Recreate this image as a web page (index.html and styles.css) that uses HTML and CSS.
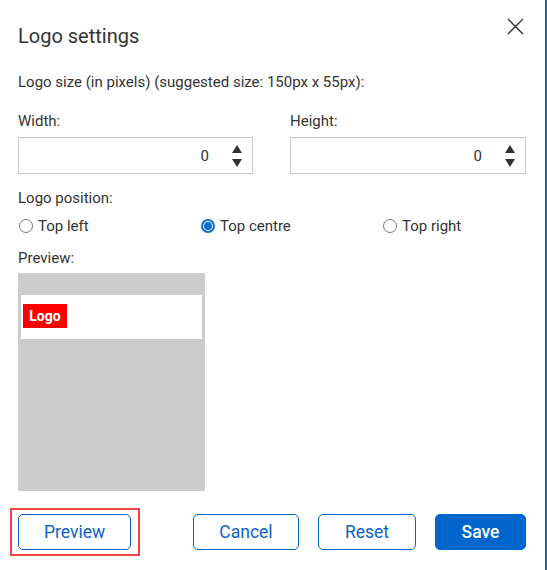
FILE: index.html
```html
<!DOCTYPE html>
<html>
<head>
<meta charset="utf-8">
<link rel="stylesheet" href="styles.css">
</head>
<body>
<div class="dialog">
  <div class="header">
    <h1 class="title">Logo settings</h1>
    <button class="close" aria-label="Close">
      <svg width="17" height="17" viewBox="0 0 17 17"><path d="M1 1 L16 16 M16 1 L1 16" stroke="#333" stroke-width="1.4" fill="none"/></svg>
    </button>
  </div>
  <p class="note">Logo size (in pixels) (suggested size: 150px x 55px):</p>
  <div class="dims">
    <div class="field">
      <div class="label">Width:</div>
      <div class="num">
        <span class="val">0</span>
        <span class="spin"><span class="up"></span><span class="down"></span></span>
      </div>
    </div>
    <div class="field">
      <div class="label">Height:</div>
      <div class="num">
        <span class="val">0</span>
        <span class="spin"><span class="up"></span><span class="down"></span></span>
      </div>
    </div>
  </div>
  <div class="label pos-label">Logo position:</div>
  <div class="radios">
    <label class="radio"><span class="dot"></span>Top left</label>
    <label class="radio on"><span class="dot"></span>Top centre</label>
    <label class="radio"><span class="dot"></span>Top right</label>
  </div>
  <div class="label prev-label">Preview:</div>
  <div class="preview">
    <div class="strip"><span class="logo">Logo</span></div>
  </div>
  <div class="footer">
    <button class="btn hl">Preview</button>
    <div class="actions">
      <button class="btn">Cancel</button>
      <button class="btn">Reset</button>
      <button class="btn primary">Save</button>
    </div>
  </div>
</div>
</body>
</html>
```

FILE: styles.css
```css
* { box-sizing: border-box; }
html, body { margin: 0; padding: 0; background: #fff; }
body { font-family: Roboto, "Liberation Sans", sans-serif; color: #333; }
.dialog {
  width: 547px;
  height: 570px;
  border-right: 2px solid #0a64c8;
  padding: 24px 19px 0 18px;
}
.header { display: flex; justify-content: space-between; align-items: flex-start; height: 24px; }
.title { margin: 0; font-size: 20px; font-weight: 400; line-height: 24px; }
.close { border: 0; background: none; padding: 0; margin: -6px 2px 0 0; width: 17px; height: 17px; cursor: pointer; }
.close svg { display: block; }
.note { margin: 24px 0 0; font-size: 15px; line-height: 20px; }
.dims { display: grid; grid-template-columns: 235px 236px; column-gap: 37px; margin-top: 19px; }
.label { font-size: 15px; line-height: 20px; }
.field .label { margin-bottom: 6px; }
.num {
  height: 37px;
  border: 1px solid #c8c8c8;
  display: flex;
  align-items: center;
  justify-content: flex-end;
  padding-right: 10px;
}
.val { font-size: 15px; margin-right: 23px; }
.spin { display: flex; flex-direction: column; gap: 6px; }
.up, .down { width: 0; height: 0; border-left: 5px solid transparent; border-right: 5px solid transparent; }
.up { border-bottom: 8px solid #333; }
.down { border-top: 8px solid #333; }
.pos-label { margin-top: 14px; }
.radios { display: grid; grid-template-columns: 182px 182px 1fr; margin-top: 8px; }
.radio { display: flex; align-items: center; font-size: 15px; line-height: 20px; }
.dot { width: 14px; height: 14px; border: 1px solid #767676; border-radius: 50%; margin: 0 5px 0 1px; display: inline-block; position: relative; }
.radio.on .dot { border: 2px solid #0a6ed1; }
.radio.on .dot::after { content: ""; position: absolute; left: 1px; top: 1px; width: 8px; height: 8px; background: #0a6ed1; border-radius: 50%; }
.prev-label { margin-top: 12px; }
.preview { width: 187px; height: 218px; background: #cccccc; margin-top: 5px; padding: 22px 3px 0; }
.strip { background: #fff; height: 44px; display: flex; align-items: center; padding-left: 2px; padding-bottom: 2px; }
.logo { background: #ff0000; color: #fff; font-weight: 700; font-size: 14px; width: 44px; height: 24px; line-height: 24px; text-align: center; }
.footer { display: flex; justify-content: space-between; margin-top: 23px; }
.actions { display: flex; gap: 19px; }
.btn {
  font-family: Roboto, "Liberation Sans", sans-serif;
  font-size: 17.5px;
  height: 36px;
  border: 1px solid #0a64c8;
  border-radius: 5px;
  background: #fff;
  color: #0a64c8;
  padding: 0;
  cursor: pointer;
}
.btn.hl { width: 113px; position: relative; }
.btn.hl::after { content: ""; position: absolute; left: -9px; right: -10px; top: -7px; bottom: -7px; border: 2px solid #f04545; }
.actions .btn:nth-child(1) { width: 106px; }
.actions .btn:nth-child(2) { width: 98px; }
.btn.primary { width: 91px; background: #0066cc; border-color: #0066cc; color: #fff; font-weight: 500; }
```
